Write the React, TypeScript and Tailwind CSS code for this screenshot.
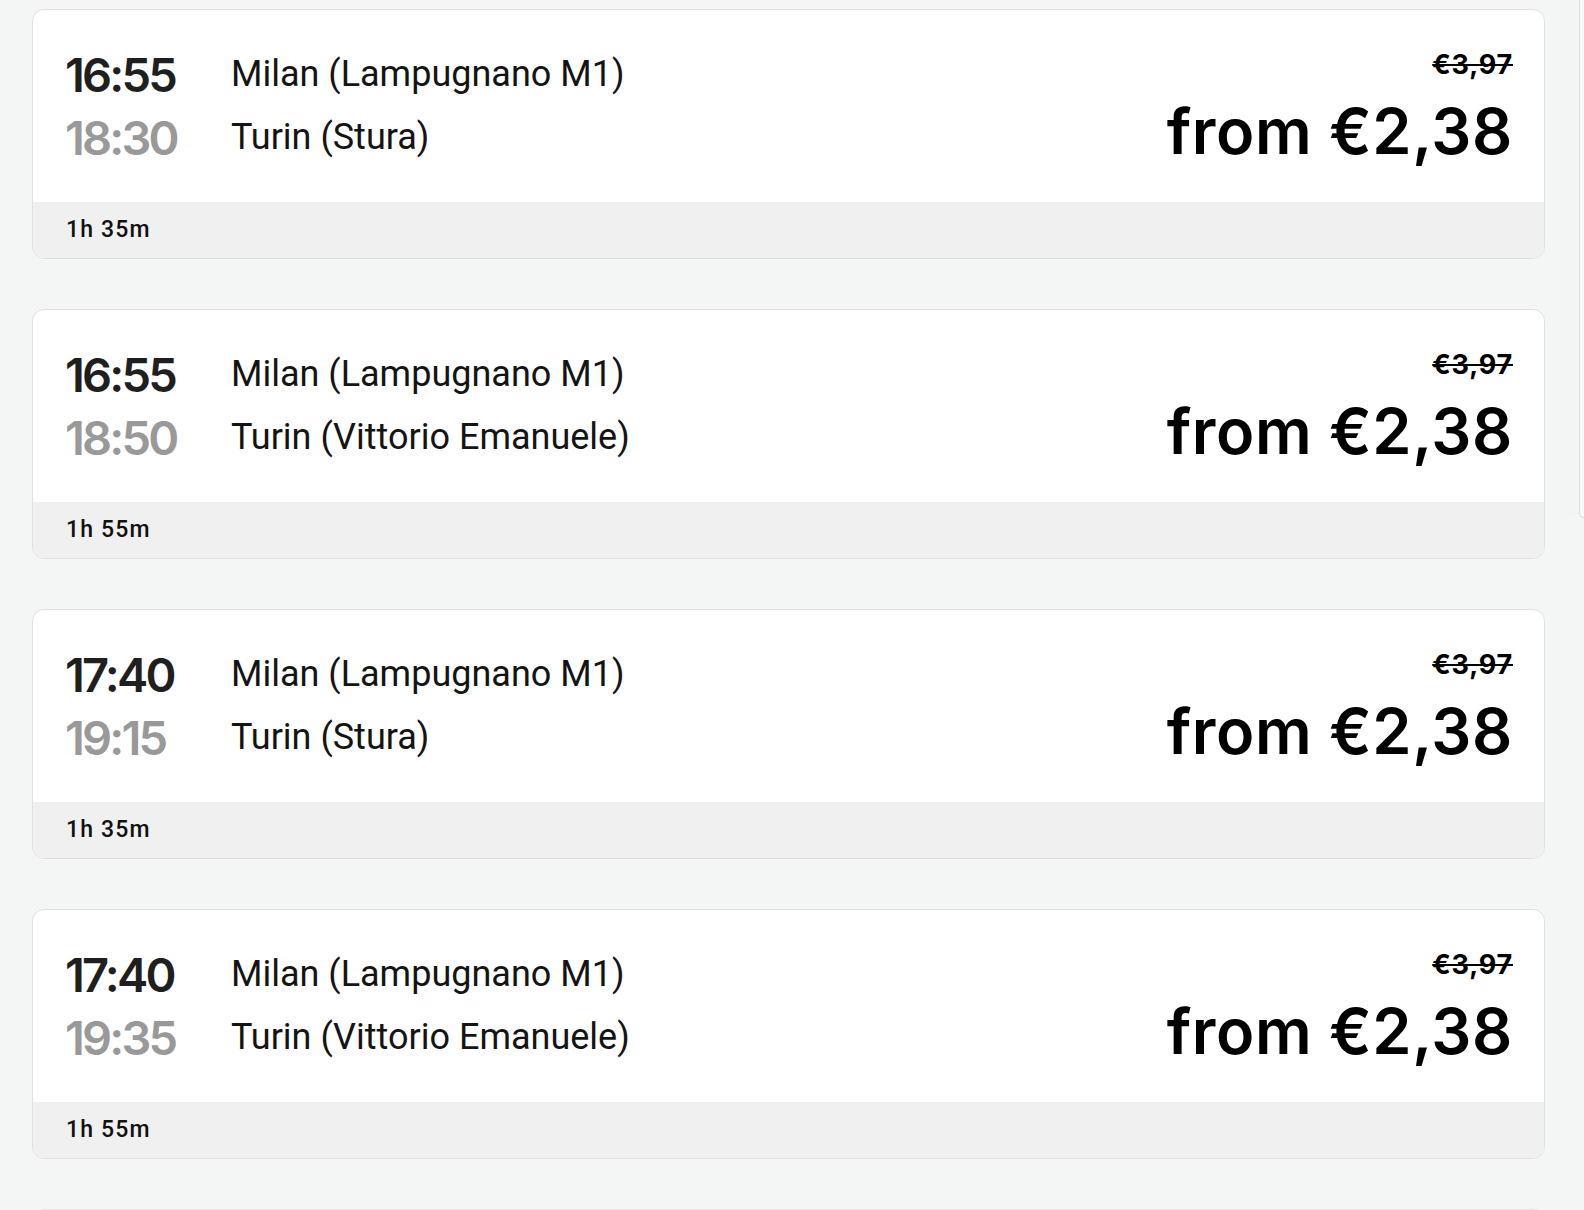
import React from 'react';

type Trip = {
  dep: string;
  arr: string;
  from: string;
  to: string;
  duration: string;
  oldPrice: string;
  price: string;
};

const TRIPS: Trip[] = [
  { dep: '16:55', arr: '18:30', from: 'Milan (Lampugnano M1)', to: 'Turin (Stura)', duration: '1h 35m', oldPrice: '€3,97', price: '€2,38' },
  { dep: '16:55', arr: '18:50', from: 'Milan (Lampugnano M1)', to: 'Turin (Vittorio Emanuele)', duration: '1h 55m', oldPrice: '€3,97', price: '€2,38' },
  { dep: '17:40', arr: '19:15', from: 'Milan (Lampugnano M1)', to: 'Turin (Stura)', duration: '1h 35m', oldPrice: '€3,97', price: '€2,38' },
  { dep: '17:40', arr: '19:35', from: 'Milan (Lampugnano M1)', to: 'Turin (Vittorio Emanuele)', duration: '1h 55m', oldPrice: '€3,97', price: '€2,38' },
];

const TripCard: React.FC<{ trip: Trip }> = ({ trip }) => (
  <div className="rounded-xl border border-[#dfe1e0] bg-white overflow-hidden">
    <div className="h-[192px] flex items-start justify-between pl-[32px] pr-[31px]">
      <div className="flex gap-[51px] pt-[33px]">
        <div className="min-w-[115px] flex flex-col font-['Inter',sans-serif] font-semibold text-[47px] tracking-[-0.06em] leading-[63px]">
          <span className="text-[#1f1f1f]">{trip.dep}</span>
          <span className="text-[#999999]">{trip.arr}</span>
        </div>
        <div className="flex flex-col font-['Roboto',sans-serif] text-[36px] leading-[63px] text-[#141414]">
          <span>{trip.from}</span>
          <span>{trip.to}</span>
        </div>
      </div>
      <div className="flex flex-col items-end pt-[40px] font-['Inter',sans-serif] text-black">
        <span className="text-[27px] font-bold leading-[30px] tracking-[0.03em] line-through">{trip.oldPrice}</span>
        <span className="mt-[16px] text-[63px] font-semibold leading-[70px] tracking-[0.01em]">from {trip.price}</span>
      </div>
    </div>
    <div className="h-[56px] bg-[#f0f0f0] flex items-center pl-[33px] font-['Roboto',sans-serif] font-medium text-[23px] tracking-[0.05em] text-[#111111]">
      {trip.duration}
    </div>
  </div>
);

export default function App() {
  return (
    <div className="flex min-h-screen bg-[#f4f6f5] overflow-hidden">
      <div className="box-content w-[1513px] shrink-0 pl-[32px] pt-[9px] flex flex-col gap-[50px]">
        {TRIPS.map((t, i) => (
          <TripCard key={i} trip={t} />
        ))}
        <div className="h-[250px] rounded-xl border border-[#dfe1e0] bg-white" />
      </div>
      <div className="ml-[34px] flex-1 h-[518px] bg-[#f9f9f9] border-l border-b border-[#dcdcdc] rounded-bl-2xl shadow-[-10px_0_20px_rgba(0,0,0,0.04)]" />
    </div>
  );
}
